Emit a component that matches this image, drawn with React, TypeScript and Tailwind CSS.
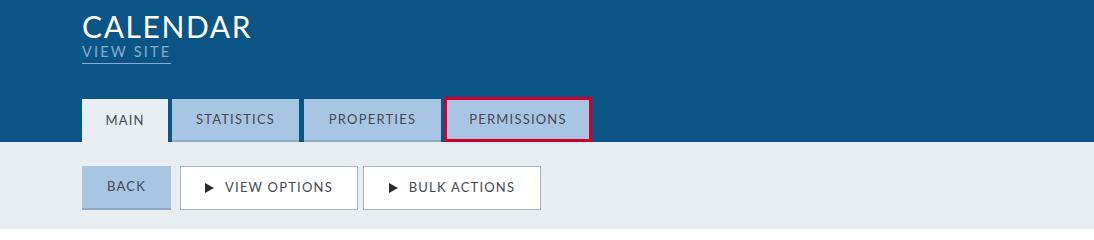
function Arrow() {
  return (
    <svg width="9" height="10" viewBox="0 0 9 10" className="shrink-0">
      <path d="M0 0 L9 5 L0 10 Z" fill="#2b2b2b" />
    </svg>
  );
}

export default function App() {
  const tabs = ["STATISTICS", "PROPERTIES"];
  return (
    <div className="min-h-[229px] bg-[#e8edf1] font-['Lato',sans-serif] text-[#44494f]">
      <div className="bg-[#0b5586] h-[142px] px-[82px] flex flex-col">
        <h1 className="text-white text-[30px] leading-none tracking-[1.6px] pt-[11px]">CALENDAR</h1>
        <a className="mt-[4px] self-start text-[#86abd0] text-[14.5px] tracking-[2.2px] leading-none pb-[3px] border-b border-[#86abd0]">
          VIEW SITE
        </a>
        <div className="mt-auto flex items-end gap-[4px]">
          <div className="w-[86px] h-[43px] bg-[#e8edf1] flex items-center justify-center text-[13px] tracking-[1.2px]">
            MAIN
          </div>
          <div className="w-[127px] h-[43px] bg-[#a8c5e3] border-b-2 border-[#8ea7c2] flex items-center justify-center text-[13px] tracking-[1.2px]">
            {tabs[0]}
          </div>
          <div className="ml-[1px] w-[137px] h-[43px] bg-[#a8c5e3] border-b-2 border-[#8ea7c2] flex items-center justify-center text-[13px] tracking-[1.2px]">
            {tabs[1]}
          </div>
          <div className="-ml-[1px] w-[148px] h-[45px] bg-[#a8c5e3] border-[3px] border-[#d0002a] flex items-center justify-center text-[13px] tracking-[1.2px]">
            PERMISSIONS
          </div>
        </div>
      </div>
      <div className="px-[82px] pt-[24px] flex gap-[9px]">
        <button className="w-[89px] h-[44px] bg-[#a8c5e3] border-b-2 border-[#8ea7c2] text-[13px] tracking-[1.2px]">
          BACK
        </button>
        <button className="w-[178px] h-[44px] bg-white border border-[#a9b6c6] text-[13px] tracking-[1.2px] flex items-center justify-center gap-[11px]">
          <Arrow />
          VIEW OPTIONS
        </button>
        <button className="-ml-[4px] w-[178px] h-[44px] bg-white border border-[#a9b6c6] text-[13px] tracking-[1.2px] flex items-center justify-center gap-[11px]">
          <Arrow />
          BULK ACTIONS
        </button>
      </div>
    </div>
  );
}
